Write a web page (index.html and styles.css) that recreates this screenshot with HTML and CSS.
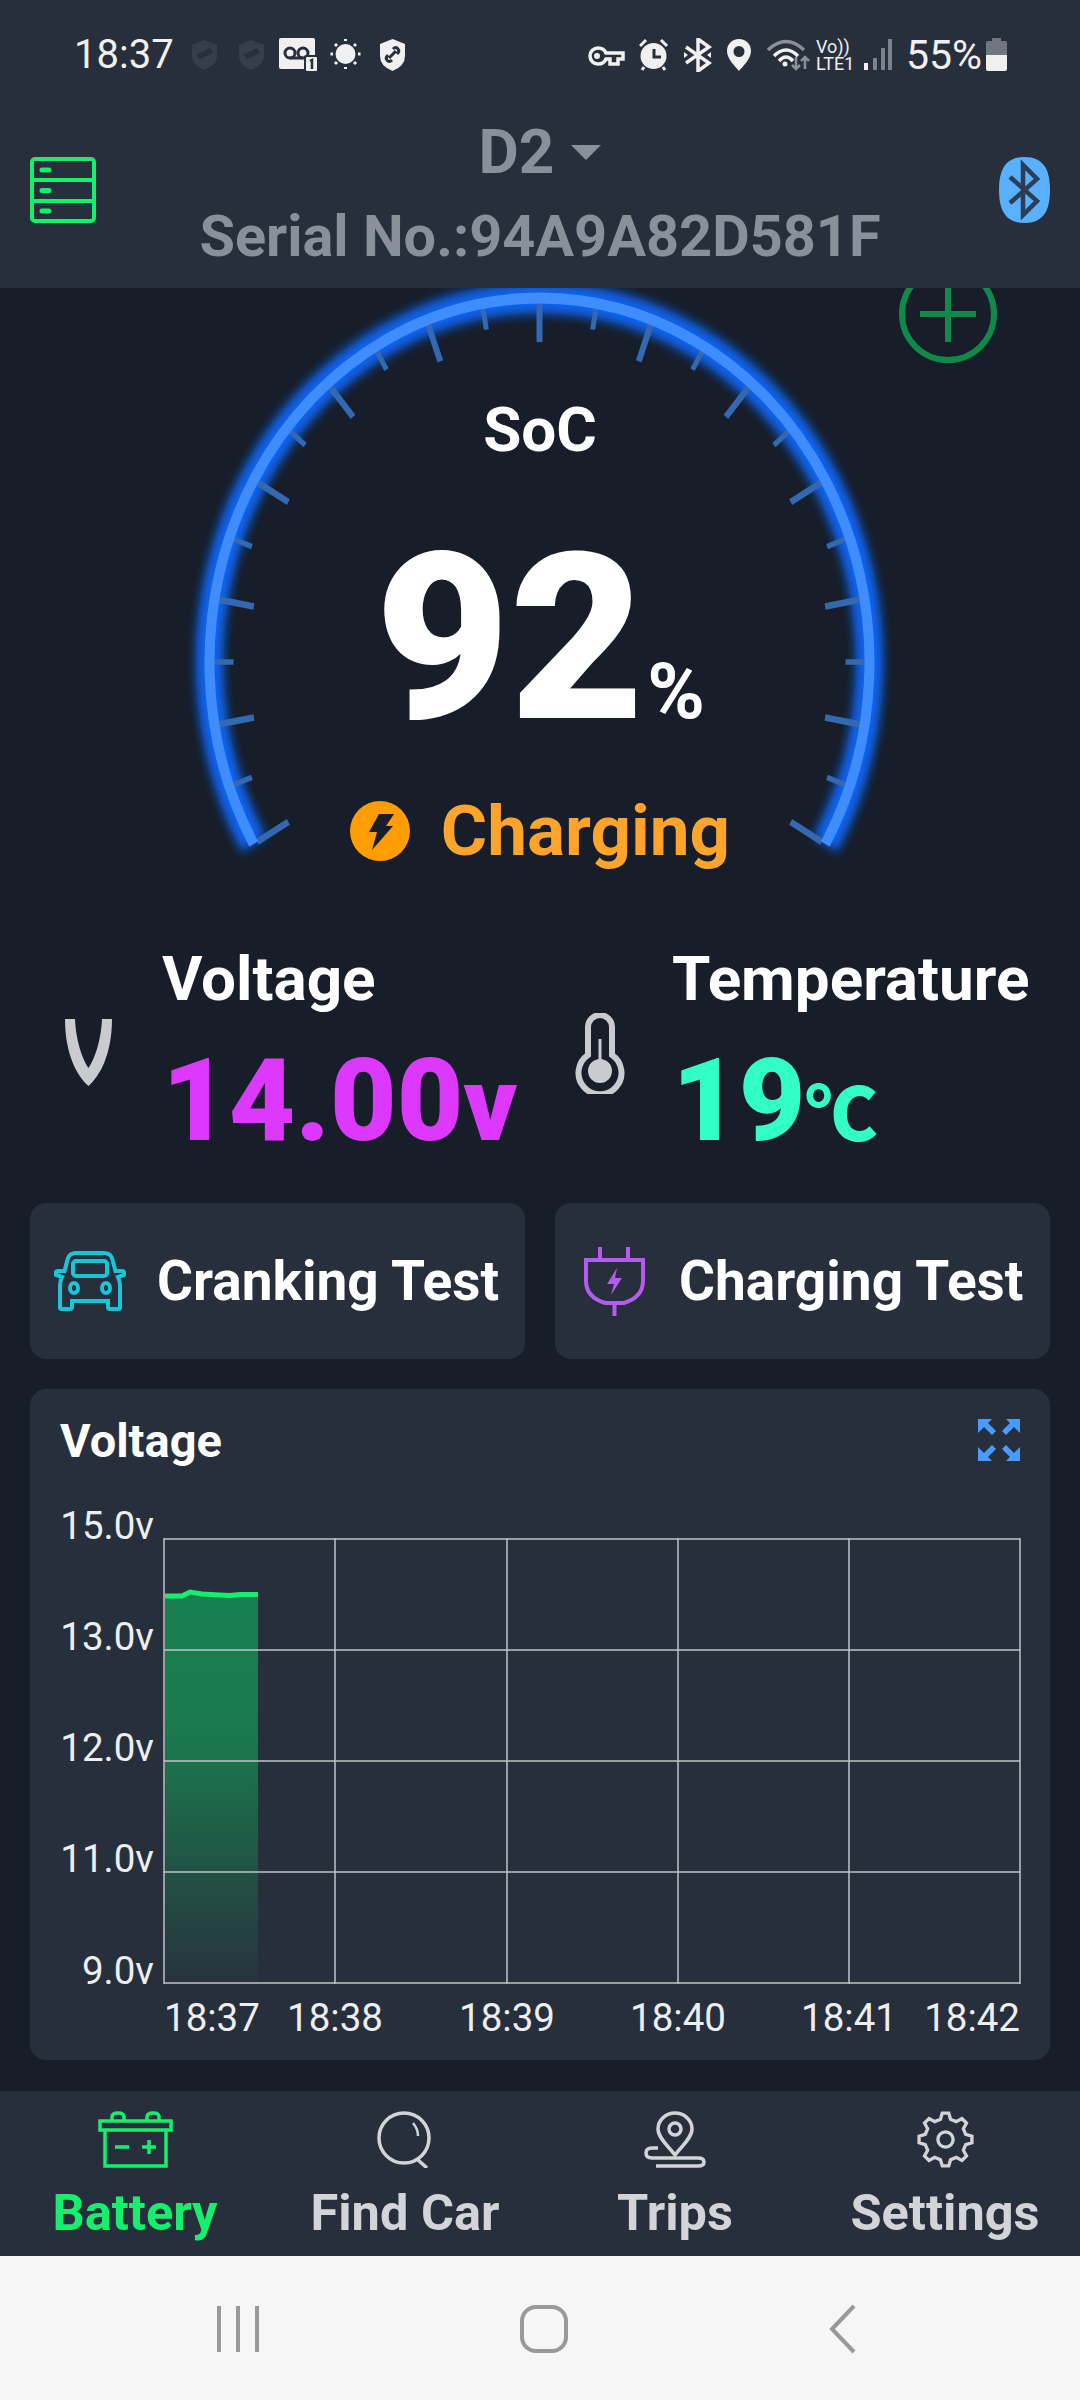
FILE: index.html
```html
<!DOCTYPE html>
<html lang="en">
  <head>
    <meta charset="UTF-8" />
    <meta name="viewport" content="width=device-width, initial-scale=1.0" />
    <title>Battery Monitor</title>
    <link rel="stylesheet" href="styles.css">
  </head>
  <body>
    <div class="app">
      <header class="header">
        <div class="status-bar">
          <div class="status-group">
            <span class="clock">18:37</span>
            <svg width="47" height="34" viewBox="0 0 47 34"><path class="shield-dim" d="M12 2 L25 7 V18 Q25 27 12 32 Q0 27 0 18 V7 Z M4 17 L18 10 L21 15 L8 21 Z"/></svg>
            <svg width="40" height="34" viewBox="0 0 40 34"><path class="shield-dim" d="M12 2 L25 7 V18 Q25 27 12 32 Q0 27 0 18 V7 Z M4 17 L18 10 L21 15 L8 21 Z"/></svg>
            <svg width="51" height="34" viewBox="0 0 51 34">
              <rect class="ink" x="0" y="0" width="36" height="31" rx="2"/>
              <circle class="tape" cx="11" cy="15" r="5"/>
              <circle class="tape" cx="24" cy="15" r="5"/>
              <path class="tape" d="M11 20 H24"/>
              <rect class="ink-dark" x="25" y="17" width="15" height="17" rx="2"/>
              <rect class="ink" x="27" y="19" width="11" height="14" rx="1"/>
              <path class="tape-thin" d="M31 23 L33 22 V31"/>
            </svg>
            <svg width="49" height="34" viewBox="0 0 49 34">
              <circle class="ink" cx="15.500" cy="16" r="10"/>
              <path class="rays" d="M15.500 1 V3 M15.500 29 V31 M0.500 16 H3 M28 16 H30.500 M5 6 L7 8 M24 24 L26 26 M26 6 L24 8 M7 24 L5 26"/>
            </svg>
            <svg width="27" height="34" viewBox="0 0 27 34">
              <path class="ink" d="M13.500 1 L26 6 V18 Q26 28 13.500 33 Q1 28 1 18 V6 Z"/>
              <path class="tape" d="M10 20 L17 13 M14 11 Q17 8 19 11 Q21 13 18 16 M13 22 Q10 25 8 22 Q6 20 9 17"/>
            </svg>
          </div>
          <div class="status-group">
            <svg width="51" height="34" viewBox="0 0 51 34">
              <path class="key" d="M10 10 A8 8 0 1 0 10 26 Q16 26 18 21 H22 V26 H30 V21 H35 V15 H18 Q16 10 10 10 Z"/>
              <circle class="ink" cx="9" cy="18" r="3"/>
            </svg>
            <svg width="45" height="34" viewBox="0 0 45 34">
              <circle class="ink" cx="14.500" cy="18" r="13"/>
              <path class="tape-clock" d="M15 11 V19 H22"/>
              <path class="rays-thick" d="M1 8 L7 2 M22 2 L28 8 M5 29 L3 32 M24 29 L26 32"/>
            </svg>
            <svg width="43" height="34" viewBox="0 0 43 34">
              <path class="bt-status" d="M2 9 L25 25 L14 33 V1 L25 9 L2 25"/>
              <path class="ink" d="M0 14 L4 17 L0 20 Z M27 14 L23 17 L27 20 Z"/>
            </svg>
            <svg width="40" height="34" viewBox="0 0 40 34">
              <path class="ink" fill-rule="evenodd" d="M12 1 C19 1 24 6 24 13 C24 21 16 28 12 33 C8 28 0 21 0 13 C0 6 5 1 12 1 Z M12 8 A5.500 5.500 0 1 0 12 19 A5.500 5.500 0 1 0 12 8 Z"/>
            </svg>
            <svg width="49" height="34" viewBox="0 0 49 34">
              <path class="wifi-dim" d="M1 12 Q19 -5 37 12"/>
              <path class="wifi" d="M7 18 Q19 6 31 18 M12 23 Q19 15 26 23"/>
              <circle class="ink" cx="18" cy="26" r="2.500"/>
              <path class="wifi-arrows" d="M29 19 V31 M25 27 L29 31 L33 27 M38 31 V19 M34 23 L38 19 L42 23"/>
            </svg>
            <span class="volte"><span>Vo))</span><span>LTE1</span></span>
            <svg width="42" height="34" viewBox="0 0 42 34">
              <path class="signal-on" d="M2 25 V32"/>
              <path class="signal-off" d="M11 20 V32 M19 10 V32 M26 1 V32"/>
            </svg>
            <span class="battery-text">55%</span>
            <svg width="21" height="34" viewBox="0 0 21 34">
              <path class="battery-empty" d="M6 0 H15 V3 H19 Q21 3 21 5 V17 H0 V5 Q0 3 2 3 H6 Z"/>
              <path class="ink" d="M0 17 H21 V31 Q21 33 19 33 H2 Q0 33 0 31 Z"/>
            </svg>
          </div>
        </div>

        <div class="topbar">
          <svg class="devices-icon" width="66" height="66" viewBox="0 0 66 66">
            <rect x="2" y="2" width="62" height="62" rx="3"/>
            <path d="M2 23 H64 M2 44 H64"/>
            <path class="dots" d="M12 13 H19 M12 33.500 H19 M12 54 H19"/>
          </svg>
          <div class="device-info">
            <div class="device-name">D2<span class="caret"></span></div>
            <div class="serial">Serial No.:94A9A82D581F</div>
          </div>
          <svg class="bt-icon" width="51" height="66" viewBox="0 0 51 66">
            <path class="bt-bg" d="M25.500 0 C44 0 51 12 51 33 C51 54 44 66 25.500 66 C7 66 0 54 0 33 C0 12 7 0 25.500 0 Z"/>
            <path class="bt-mark" d="M11 20 L38 44 L24 58 V8 L38 22 L11 46"/>
          </svg>
        </div>
      </header>

      <main class="main">
        <section class="gauge">
          <svg class="gauge-dial" width="1080" height="650" viewBox="0 0 1080 650">
            <defs>
              <filter id="glow" x="-10%" y="-10%" width="120%" height="120%">
                <feGaussianBlur stdDeviation="5" />
              </filter>
            </defs>
            <g transform="translate(539.500 374) scale(1 1.103)">
              <path class="arc-glow" d="M-285.800 165 A330 330 0 1 1 285.800 165"/>
              <g class="ticks">
                <line class="major" y1="-326" y2="-290" transform="rotate(-120)"/>
                <line class="minor" y1="-326" y2="-306" transform="rotate(-110)"/>
                <line class="major" y1="-326" y2="-290" transform="rotate(-100)"/>
                <line class="minor" y1="-326" y2="-306" transform="rotate(-90)"/>
                <line class="major" y1="-326" y2="-290" transform="rotate(-80)"/>
                <line class="minor" y1="-326" y2="-306" transform="rotate(-70)"/>
                <line class="major" y1="-326" y2="-290" transform="rotate(-60)"/>
                <line class="minor" y1="-326" y2="-306" transform="rotate(-50)"/>
                <line class="major" y1="-326" y2="-290" transform="rotate(-40)"/>
                <line class="minor" y1="-326" y2="-306" transform="rotate(-30)"/>
                <line class="major" y1="-326" y2="-290" transform="rotate(-20)"/>
                <line class="minor" y1="-326" y2="-306" transform="rotate(-10)"/>
                <line class="major" y1="-326" y2="-290"/>
                <line class="minor" y1="-326" y2="-306" transform="rotate(10)"/>
                <line class="major" y1="-326" y2="-290" transform="rotate(20)"/>
                <line class="minor" y1="-326" y2="-306" transform="rotate(30)"/>
                <line class="major" y1="-326" y2="-290" transform="rotate(40)"/>
                <line class="minor" y1="-326" y2="-306" transform="rotate(50)"/>
                <line class="major" y1="-326" y2="-290" transform="rotate(60)"/>
                <line class="minor" y1="-326" y2="-306" transform="rotate(70)"/>
                <line class="major" y1="-326" y2="-290" transform="rotate(80)"/>
                <line class="minor" y1="-326" y2="-306" transform="rotate(90)"/>
                <line class="major" y1="-326" y2="-290" transform="rotate(100)"/>
                <line class="minor" y1="-326" y2="-306" transform="rotate(110)"/>
                <line class="major" y1="-326" y2="-290" transform="rotate(120)"/>
              </g>
              <path class="arc" d="M-285.800 165 A330 330 0 1 1 285.800 165"/>
            </g>
          </svg>

          <svg class="add-btn" width="100" height="100" viewBox="0 0 100 100">
            <circle cx="50" cy="50" r="46"/>
            <path d="M50 22 V78 M22 50 H78"/>
          </svg>

          <div class="gauge-text">
            <div class="soc-label">SoC</div>
            <div class="soc-value">92<span class="soc-unit">%</span></div>
            <div class="charge-state">
              <svg width="60" height="60" viewBox="0 0 60 60">
                <circle class="charge-circle" cx="30" cy="30" r="30"/>
                <path class="charge-bolt" d="M29 13 H44 L36 25 H43 L22 49 L27 31 H19 Z"/>
              </svg>
              <span>Charging</span>
            </div>
          </div>
        </section>

        <section class="stats">
          <div class="stat stat-volt">
            <svg class="stat-icon" width="47" height="68" viewBox="0 0 47 68">
              <path d="M0 1 C0 36 12 58 23.500 68 C35 58 47 36 47 1 L37 1 C36 24 29 42 23.500 50 C18 42 11 24 10 1 Z"/>
            </svg>
            <div class="stat-body">
              <div class="stat-label">Voltage</div>
              <div class="stat-value voltage">14.00<span class="stat-unit">v</span></div>
            </div>
          </div>
          <div class="stat stat-temp">
            <svg class="stat-icon thermo-icon" width="50" height="81" viewBox="0 0 50 81">
              <path class="thermo" d="M13 14 A12 12 0 0 1 37 14 V42 A21.500 21.500 0 1 1 13 42 Z"/>
              <path class="thermo-line" d="M25 26 V56"/>
              <circle cx="25" cy="58" r="12"/>
            </svg>
            <div class="stat-body">
              <div class="stat-label">Temperature</div>
              <div class="stat-value temp">19<span class="stat-unit-c">℃</span></div>
            </div>
          </div>
        </section>

        <section class="tests">
          <button class="test-btn">
            <svg class="car-icon" width="72" height="60" viewBox="0 0 72 60">
              <path d="M10 22 L14 7 Q16 2 22 2 H50 Q56 2 58 7 L62 22"/>
              <rect x="19" y="10" width="34" height="15" rx="3"/>
              <path d="M10 20 H4 Q1 20 2 24 L8 26 Q6 30 6 34 V57 Q6 58 8 58 H16 Q18 58 18 56 V50 H54 V56 Q54 58 56 58 H64 Q66 58 66 57 V34 Q66 30 64 26 L70 24 Q71 20 68 20 H62"/>
              <ellipse cx="20" cy="37" rx="4" ry="5"/>
              <ellipse cx="52" cy="37" rx="4" ry="5"/>
            </svg>
            <span>Cranking Test</span>
          </button>
          <button class="test-btn">
            <svg class="plug-icon" width="61" height="69" viewBox="0 0 61 69">
              <path d="M16 0 V12 M44 0 V12 M30.500 56 V69"/>
              <path d="M2 13 H59 V34 Q59 50 40 56 H21 Q2 50 2 34 Z"/>
              <path class="plug-bolt" d="M33 21 L23 37 H30 L27 48 L38 31 H31 Z"/>
            </svg>
            <span>Charging Test</span>
          </button>
        </section>

        <section class="chart-card">
          <div class="chart-head">
            <h2>Voltage</h2>
            <svg class="expand-icon" width="42" height="42" viewBox="0 0 42 42">
              <path d="M0 0 H14 L10 4 L18 12 L14 16 L6 8 L0 14 Z"/>
              <path d="M42 0 H28 L32 4 L24 12 L28 16 L36 8 L42 14 Z"/>
              <path d="M0 42 H14 L10 38 L18 30 L14 26 L6 34 L0 28 Z"/>
              <path d="M42 42 H28 L32 38 L24 30 L28 26 L36 34 L42 28 Z"/>
            </svg>
          </div>
          <svg class="chart" width="1020" height="570" viewBox="0 0 1020 570">
            <defs>
              <linearGradient id="fade" x1="0" y1="0" x2="0" y2="1">
                <stop offset="0" stop-color="#188050"/>
                <stop offset="0.35" stop-color="#1a7a4e"/>
                <stop offset="1" stop-color="#1a7a4e" stop-opacity="0.05"/>
              </linearGradient>
            </defs>
            <rect x="135" y="105" width="93" height="388" fill="url(#fade)"/>
            <path class="grid" d="M134 49 H990 M134 160 H990 M134 271 H990 M134 382 H990 M134 493 H990 M134 48 V494 M305 48 V494 M477 48 V494 M648 48 V494 M819 48 V494 M990 48 V494"/>
            <path class="line" d="M135 106 L152 106 L160 102 L172 104 L190 105 L200 105.500 L210 104.500 L228 104.500"/>
            <g class="y-labels">
              <text x="124" y="49">15.0v</text>
              <text x="124" y="160">13.0v</text>
              <text x="124" y="271">12.0v</text>
              <text x="124" y="382">11.0v</text>
              <text x="124" y="494">9.0v</text>
            </g>
            <g class="x-labels">
              <text x="134" y="541">18:37</text>
              <text class="mid" x="305" y="541">18:38</text>
              <text class="mid" x="477" y="541">18:39</text>
              <text class="mid" x="648" y="541">18:40</text>
              <text class="mid" x="819" y="541">18:41</text>
              <text class="last" x="990" y="541">18:42</text>
            </g>
          </svg>
        </section>
      </main>

      <nav class="tabs">
        <a class="tab active">
          <svg width="75" height="57" viewBox="0 0 75 57">
            <path d="M14 10 V6 Q14 2 20 2 Q26 2 26 6 V10 M49 10 V6 Q49 2 55 2 Q61 2 61 6 V10"/>
            <rect x="2" y="10" width="71" height="9"/>
            <path d="M7 19 V55 H68 V19"/>
            <path d="M17 36 H31 M44 36 H58 M51 29 V43"/>
          </svg>
          <span>Battery</span>
        </a>
        <a class="tab">
          <svg width="56" height="57" viewBox="0 0 56 57">
            <circle cx="27" cy="27" r="25"/>
            <path d="M40 48 L50 57"/>
            <path class="thin" d="M36 12 Q41 18 41 25"/>
          </svg>
          <span>Find Car</span>
        </a>
        <a class="tab">
          <svg width="62" height="57" viewBox="0 0 62 57">
            <path d="M31 2 C40 2 48 9 48 18 C48 27 37 36 31 44 C25 36 14 27 14 18 C14 9 22 2 31 2 Z"/>
            <circle cx="31" cy="18" r="6"/>
            <path d="M14 37 H8 Q2 37 2 42 Q2 47 8 47 H54 Q60 47 60 51 Q60 55 54 55 H12"/>
          </svg>
          <span>Trips</span>
        </a>
        <a class="tab">
          <svg width="57" height="57" viewBox="-30 -30 60 60">
            <path d="M-5.300 -21.300 L-3.400 -27.800 L3.400 -27.800 L5.300 -21.300 L11.300 -18.800 L17.300 -22.100 L22.100 -17.300 L18.800 -11.300 L21.300 -5.300 L27.800 -3.400 L27.800 3.400 L21.300 5.300 L18.800 11.300 L22.100 17.300 L17.300 22.100 L11.300 18.800 L5.300 21.300 L3.400 27.800 L-3.400 27.800 L-5.300 21.300 L-11.300 18.800 L-17.300 22.100 L-22.100 17.300 L-18.800 11.300 L-21.300 5.300 L-27.800 3.400 L-27.800 -3.400 L-21.300 -5.300 L-18.800 -11.300 L-22.100 -17.300 L-17.300 -22.100 L-11.300 -18.800 Z"/>
            <circle r="8"/>
          </svg>
          <span>Settings</span>
        </a>
      </nav>

      <footer class="sys-nav">
        <svg width="42" height="48" viewBox="0 0 42 48"><path d="M2 1 V47 M21 1 V47 M40 1 V47"/></svg>
        <svg width="48" height="48" viewBox="0 0 48 48"><rect x="2" y="2" width="44" height="44" rx="14"/></svg>
        <svg width="28" height="50" viewBox="0 0 28 50"><path d="M25 2 L3 25 L25 48"/></svg>
      </footer>
    </div>
  </body>
</html>
```

FILE: styles.css
```css
* {
  box-sizing: border-box;
}

body {
  margin: 0;
  font-family: Roboto, "Noto Sans CJK SC", sans-serif;
  background-color: #171d29;
}

.app {
  width: 1080px;
  height: 2400px;
  display: flex;
  flex-direction: column;
  overflow: hidden;
}

svg {
  display: block;
  flex-shrink: 0;
  fill: none;
}

/* status bar and header */
.header {
  position: relative;
  z-index: 2;
  height: 288px;
  background-color: #282f3c;
}

.status-bar {
  height: 110px;
  padding: 38px 73px 0 74px;
  display: flex;
  justify-content: space-between;
  align-items: flex-start;
  color: #f0f0f0;
}

.status-group {
  display: flex;
  align-items: flex-start;
}

.clock {
  width: 118px;
  font-size: 40px;
  line-height: 34px;
}

.battery-text {
  width: 80px;
  font-size: 41px;
  line-height: 34px;
}

.volte {
  width: 48px;
  display: flex;
  flex-direction: column;
  font-size: 18px;
  line-height: 17px;
}

.ink {
  fill: #f0f0f0;
}

.ink-dark {
  fill: #282f3c;
}

.shield-dim {
  fill: #363e4c;
  fill-rule: evenodd;
}

.tape,
.tape-clock {
  stroke: #282f3c;
  stroke-width: 3;
  fill: none;
}

.tape-thin {
  stroke: #282f3c;
  stroke-width: 2.5;
}

.rays,
.rays-thick {
  stroke: #f0f0f0;
  stroke-width: 3;
}

.key {
  fill: none;
  stroke: #f0f0f0;
  stroke-width: 3.5;
}

.bt-status {
  stroke: #f0f0f0;
  stroke-width: 3.5;
}

.wifi,
.wifi-dim {
  stroke: #f0f0f0;
  stroke-width: 3.5;
}

.wifi-dim {
  stroke: #8b9099;
}

.wifi-arrows {
  stroke: #8b9099;
  stroke-width: 2.5;
}

.signal-on,
.signal-off {
  stroke: #f0f0f0;
  stroke-width: 4;
}

.signal-off {
  stroke: #7d838d;
}

.battery-empty {
  fill: #70767f;
}

.topbar {
  height: 160px;
  padding: 0 30px;
  display: flex;
  justify-content: space-between;
  align-items: center;
}

.devices-icon {
  stroke: #12f06c;
  stroke-width: 4;
}

.devices-icon .dots {
  stroke-width: 5;
  stroke-linecap: round;
}

.device-info {
  margin-right: 15px;
  padding-top: 10px;
  display: flex;
  flex-direction: column;
  align-items: center;
  color: #8a9099;
  font-weight: 700;
}

.device-name {
  display: flex;
  align-items: center;
  font-size: 62px;
  line-height: 72px;
}

.caret {
  margin-left: 17px;
  border-left: 15px solid transparent;
  border-right: 15px solid transparent;
  border-top: 15px solid #8a9099;
}

.serial {
  margin-top: 10px;
  font-size: 57.700px;
  line-height: 76px;
  white-space: nowrap;
}

.bt-bg {
  fill: #58b0ff;
}

.bt-mark {
  stroke: #2c3d55;
  stroke-width: 4.5;
}

/* gauge */
.main {
  flex: 1;
  display: flex;
  flex-direction: column;
}

.gauge {
  position: relative;
  height: 650px;
}

.arc {
  stroke: #3f8cff;
  stroke-width: 10;
}

.arc-glow {
  stroke: #0f63f0;
  stroke-width: 28;
  filter: url(#glow);
}

.ticks line {
  stroke: #3468b0;
}

.ticks .major {
  stroke-width: 6;
}

.ticks .minor {
  stroke-width: 5;
}

.add-btn {
  position: absolute;
  top: -24px;
  left: 898px;
  stroke: #0f8a4a;
  stroke-width: 6;
}

.gauge-text {
  position: absolute;
  top: 0;
  left: 0;
  right: 0;
  display: flex;
  flex-direction: column;
  align-items: center;
  color: #fff;
}

.soc-label {
  margin-top: 107px;
  font-size: 62px;
  line-height: 70px;
  font-weight: 700;
}

.soc-value {
  margin-top: 79px;
  font-size: 232px;
  line-height: 190px;
  font-weight: 900;
}

.soc-unit {
  margin-left: 3px;
  font-size: 78px;
  font-weight: 700;
}

.charge-state {
  margin-top: 6px;
  display: flex;
  align-items: center;
  gap: 31px;
  font-size: 71px;
  line-height: 76px;
  font-weight: 700;
  color: #ffa42b;
}

.charge-circle {
  fill: #ff9d00;
}

.charge-bolt {
  fill: #171d29;
}

/* voltage and temperature */
.stats {
  height: 265px;
  display: flex;
}

.stat {
  display: flex;
  align-items: flex-start;
}

.stat-volt {
  width: 540px;
  padding-left: 65px;
  gap: 50px;
}

.stat-temp {
  padding-left: 35px;
  gap: 47px;
}

.stat-icon {
  margin-top: 80px;
  fill: #c9cbce;
}

.thermo-icon {
  margin-top: 75px;
}

.stat-icon .thermo {
  fill: none;
  stroke: #c9cbce;
  stroke-width: 6;
}

.stat-icon .thermo-line {
  stroke: #c9cbce;
  stroke-width: 3;
}

.stat-body {
  padding-top: 6px;
}

.stat-label {
  font-size: 62px;
  line-height: 70px;
  font-weight: 700;
  color: #fff;
}

.stat-value {
  margin-top: 22px;
  font-size: 115px;
  line-height: 130px;
  font-weight: 900;
}

.voltage {
  color: #dc38ff;
}

.temp {
  color: #32ffc5;
}

.stat-unit {
  font-size: 104px;
}

.stat-unit-c {
  font-family: "Noto Sans CJK SC", sans-serif;
  font-size: 72px;
  font-weight: 900;
}

/* test buttons */
.tests {
  padding: 0 30px;
  display: flex;
  gap: 30px;
}

.test-btn {
  flex: 1;
  height: 156px;
  padding: 0 0 0 24px;
  display: flex;
  align-items: center;
  gap: 31px;
  border: none;
  border-radius: 16px;
  background-color: #282f3c;
  color: #fff;
  font-family: inherit;
  font-size: 55px;
  font-weight: 700;
}

.car-icon {
  stroke: #1cc4d8;
  stroke-width: 4;
}

.plug-icon {
  margin-left: 5px;
  margin-right: 3px;
  stroke: #b45cf0;
  stroke-width: 4;
}

.plug-icon .plug-bolt {
  stroke: none;
  fill: #b45cf0;
}

/* chart */
.chart-card {
  margin: 30px 30px 0;
  height: 671px;
  border-radius: 16px;
  background-color: #282f3c;
  display: flex;
  flex-direction: column;
}

.chart-head {
  height: 101px;
  padding: 25px 30px 0;
  display: flex;
  justify-content: space-between;
  align-items: flex-start;
}

.chart-head h2 {
  margin: 0;
  font-size: 47px;
  line-height: 54px;
  font-weight: 700;
  color: #fff;
}

.expand-icon {
  margin-top: 5px;
  fill: #4a9bff;
}

.chart text {
  font-size: 38.500px;
  fill: #eceef0;
}

.y-labels text {
  text-anchor: end;
}

.x-labels .mid {
  text-anchor: middle;
}

.x-labels .last {
  text-anchor: end;
}

.grid {
  stroke: #bfc2c7;
  stroke-width: 1.500;
}

.line {
  stroke: #14f06e;
  stroke-width: 5;
}

/* tabs */
.tabs {
  margin-top: 31px;
  height: 165px;
  display: flex;
  background-color: #282f3c;
}

.tab {
  flex: 1;
  padding-top: 20px;
  display: flex;
  flex-direction: column;
  align-items: center;
  gap: 17px;
  font-size: 50.500px;
  line-height: 56px;
  font-weight: 700;
  color: #d2d4d8;
}

.tab svg {
  stroke: #d2d4d8;
  stroke-width: 3.500;
}

.tab .thin {
  stroke-width: 2.500;
}

.tab.active {
  color: #14f06e;
}

.tab.active svg {
  stroke: #14f06e;
}

/* android navigation */
.sys-nav {
  height: 144px;
  padding: 2px 223px 0 217px;
  display: flex;
  justify-content: space-between;
  align-items: center;
  background-color: #f6f6f6;
}

.sys-nav svg {
  stroke: #999;
  stroke-width: 4;
}
```
